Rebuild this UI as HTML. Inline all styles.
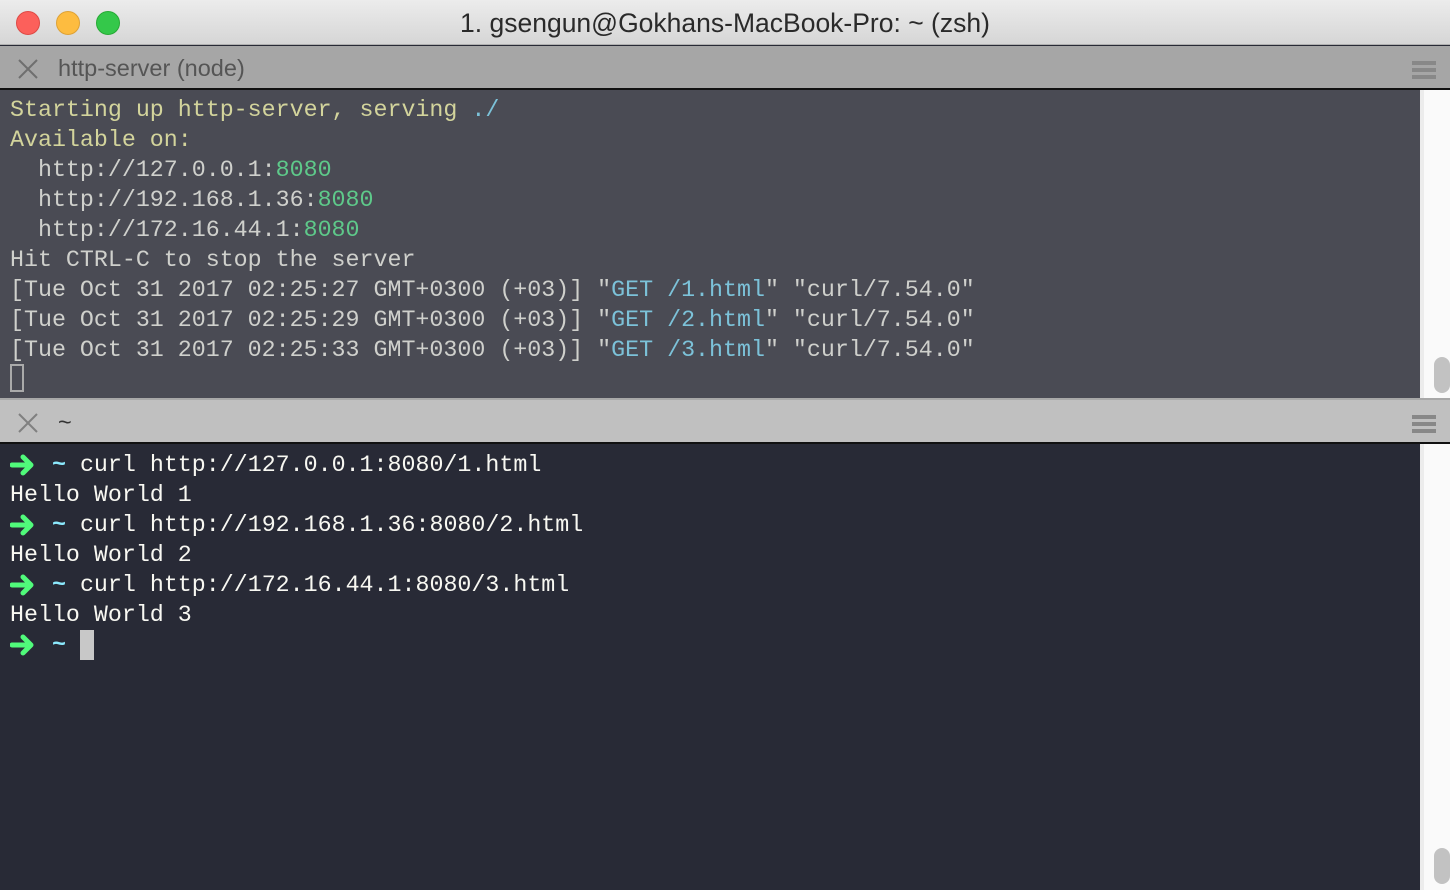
<!DOCTYPE html>
<html><head><meta charset="utf-8"><style>
*{margin:0;padding:0;box-sizing:border-box}
body{width:1450px;height:890px;overflow:hidden;background:#282a36;font-family:"Liberation Sans",sans-serif;position:relative}
.title{position:absolute;left:0;top:0;width:1450px;height:45px;background:linear-gradient(#ececec,#d6d6d6);border-bottom:1px solid #b0b0b0;text-align:center;font-size:26.5px;line-height:46px;color:#2a2a2a}
.dot{position:absolute;top:11px;width:24px;height:24px;border-radius:50%}
.tab{position:absolute;left:0;width:1450px;color:#555;font-size:23.5px}
.tab .x{position:absolute;left:17px;width:22px;height:22px}
.tab .name{position:absolute;left:58px}
.ham{position:absolute;right:14px;width:24px}
.ham i{display:block;height:4px;background:#888;margin-bottom:3px}
.pane{position:absolute;left:0;width:1420px;font-family:"Liberation Mono",monospace;font-size:23.3px;line-height:30px;padding-left:10px;white-space:pre}
.sb{position:absolute;left:1420px;width:30px;background:#fafafa;border-left:4px solid #ececec}
.thumb{position:absolute;left:10px;width:16px;height:36px;border-radius:8px;background:#c2c2c2}
.y{color:#d3d49c}.g{color:#5ec98a}.l{color:#cfd0cc}.c{color:#7cc2d9}
.w{color:#f8f8f2}.cy{color:#8be9fd;font-weight:bold}
.a{display:inline-block;width:28px;height:30px;vertical-align:top}
</style></head><body>
<div class="title">1. gsengun@Gokhans-MacBook-Pro: ~ (zsh)
<div class="dot" style="left:16px;background:#fc605b;border:1px solid #de4a45"></div>
<div class="dot" style="left:56px;background:#fdbc40;border:1px solid #dea236"></div>
<div class="dot" style="left:96px;background:#34c84a;border:1px solid #27aa35"></div>
</div>
<div class="tab" style="top:46px;height:44px;background:#a6a6a6;border-bottom:2px solid #111;line-height:44px">
<svg class="x" style="top:12px" viewBox="0 0 22 22"><path d="M2 2L20 20M20 2L2 20" stroke="#6f6f6f" stroke-width="2"/></svg>
<span class="name" style="color:#555">http-server (node)</span>
<div class="ham" style="top:15px"><i></i><i></i><i></i></div>
</div>
<div class="pane" style="top:90px;height:308px;background:#4a4b54;padding-top:5px"><span class="y">Starting up http-server, serving </span><span class="c">./</span>
<span class="y">Available on:</span>
<span class="l">  http://127.0.0.1:</span><span class="g">8080</span>
<span class="l">  http://192.168.1.36:</span><span class="g">8080</span>
<span class="l">  http://172.16.44.1:</span><span class="g">8080</span>
<span class="l">Hit CTRL-C to stop the server</span>
<span class="l">[Tue Oct 31 2017 02:25:27 GMT+0300 (+03)] "</span><span class="c">GET /1.html</span><span class="l">" "curl/7.54.0"</span>
<span class="l">[Tue Oct 31 2017 02:25:29 GMT+0300 (+03)] "</span><span class="c">GET /2.html</span><span class="l">" "curl/7.54.0"</span>
<span class="l">[Tue Oct 31 2017 02:25:33 GMT+0300 (+03)] "</span><span class="c">GET /3.html</span><span class="l">" "curl/7.54.0"</span>
<span style="display:inline-block;width:14px;height:28px;border:2px solid #aaa;vertical-align:middle;margin-top:-4px"></span></div>
<div class="sb" style="top:90px;height:308px"><div class="thumb" style="top:267px"></div></div>
<div class="tab" style="top:398px;height:46px;background:#c0c0c0;border-top:2px solid #a8a8a8;border-bottom:2px solid #111;line-height:44px">
<svg class="x" style="top:12px" viewBox="0 0 22 22"><path d="M2 2L20 20M20 2L2 20" stroke="#808080" stroke-width="2"/></svg>
<span class="name" style="color:#333">~</span>
<div class="ham" style="top:15px"><i></i><i></i><i></i></div>
</div>
<div class="pane w" style="top:444px;height:446px;background:#282a36;padding-top:6px"><svg class="a" viewBox="0 0 28 30"><path d="M2 15H20M13 7L21 15L13 23" stroke="#50fa7b" stroke-width="5" fill="none" stroke-linejoin="round" stroke-linecap="round"/></svg> <span class="cy">~</span> curl http://127.0.0.1:8080/1.html
Hello World 1
<svg class="a" viewBox="0 0 28 30"><path d="M2 15H20M13 7L21 15L13 23" stroke="#50fa7b" stroke-width="5" fill="none" stroke-linejoin="round" stroke-linecap="round"/></svg> <span class="cy">~</span> curl http://192.168.1.36:8080/2.html
Hello World 2
<svg class="a" viewBox="0 0 28 30"><path d="M2 15H20M13 7L21 15L13 23" stroke="#50fa7b" stroke-width="5" fill="none" stroke-linejoin="round" stroke-linecap="round"/></svg> <span class="cy">~</span> curl http://172.16.44.1:8080/3.html
Hello World 3
<svg class="a" viewBox="0 0 28 30"><path d="M2 15H20M13 7L21 15L13 23" stroke="#50fa7b" stroke-width="5" fill="none" stroke-linejoin="round" stroke-linecap="round"/></svg> <span class="cy">~</span> <span style="display:inline-block;width:14px;height:30px;background:#c8c8c8;vertical-align:top"></span></div>
<div class="sb" style="top:444px;height:446px"><div class="thumb" style="top:404px"></div></div>
</body></html>
